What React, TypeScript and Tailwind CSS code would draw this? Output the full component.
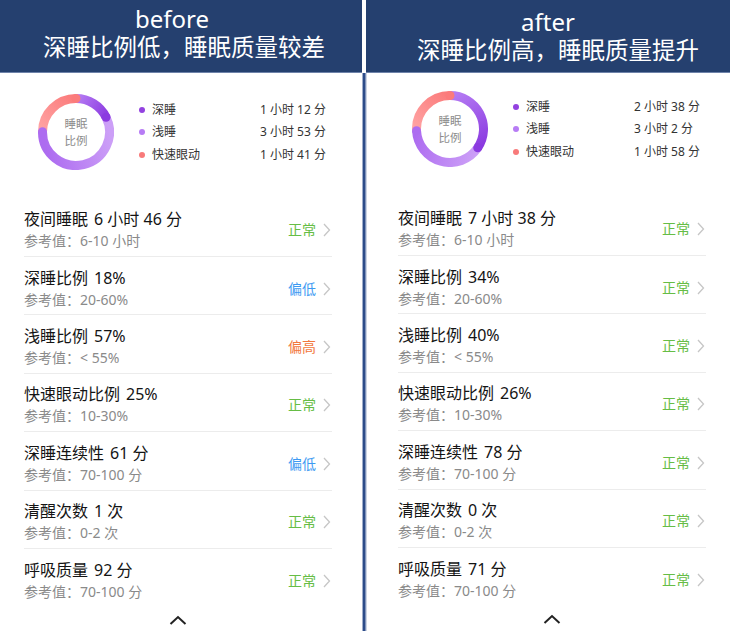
import React from "react";

type Row = { name: string; value: string; ref: string; status: string; color: string };

const GREEN = "#66bd45";
const BLUE = "#3d9af2";
const ORANGE = "#f2773c";

const leftRows: Row[] = [
  { name: "夜间睡眠", value: "6 小时 46 分", ref: "6-10 小时", status: "正常", color: GREEN },
  { name: "深睡比例", value: "18%", ref: "20-60%", status: "偏低", color: BLUE },
  { name: "浅睡比例", value: "57%", ref: "< 55%", status: "偏高", color: ORANGE },
  { name: "快速眼动比例", value: "25%", ref: "10-30%", status: "正常", color: GREEN },
  { name: "深睡连续性", value: "61 分", ref: "70-100 分", status: "偏低", color: BLUE },
  { name: "清醒次数", value: "1 次", ref: "0-2 次", status: "正常", color: GREEN },
  { name: "呼吸质量", value: "92 分", ref: "70-100 分", status: "正常", color: GREEN },
];

const rightRows: Row[] = [
  { name: "夜间睡眠", value: "7 小时 38 分", ref: "6-10 小时", status: "正常", color: GREEN },
  { name: "深睡比例", value: "34%", ref: "20-60%", status: "正常", color: GREEN },
  { name: "浅睡比例", value: "40%", ref: "< 55%", status: "正常", color: GREEN },
  { name: "快速眼动比例", value: "26%", ref: "10-30%", status: "正常", color: GREEN },
  { name: "深睡连续性", value: "78 分", ref: "70-100 分", status: "正常", color: GREEN },
  { name: "清醒次数", value: "0 次", ref: "0-2 次", status: "正常", color: GREEN },
  { name: "呼吸质量", value: "71 分", ref: "70-100 分", status: "正常", color: GREEN },
];

const FONT = { fontFamily: '"Noto Sans", "Noto Sans CJK SC", sans-serif' };

function pt(cx: number, cy: number, r: number, a: number) {
  const rad = (a * Math.PI) / 180;
  return [cx + r * Math.sin(rad), cy - r * Math.cos(rad)];
}

function Donut({ id, deep, light }: { id: string; deep: number; light: number }) {
  const cx = 38, cy = 38, r = 33.5, sw = 9;
  const segs = [
    { a0: 0, a1: deep, c0: "#b57cf3", c1: "#8b3ae0" },
    { a0: deep, a1: deep + light, c0: "#cc9ff7", c1: "#ad6cf0" },
    { a0: deep + light, a1: 360, c0: "#ffa3a3", c1: "#fb7b7b" },
  ];
  return (
    <svg width="76" height="76" viewBox="0 0 76 76">
      <defs>
        {segs.map((s, i) => {
          const [x0, y0] = pt(cx, cy, r, s.a0);
          const [x1, y1] = pt(cx, cy, r, s.a1);
          return (
            <linearGradient key={i} id={`${id}-g${i}`} gradientUnits="userSpaceOnUse" x1={x0} y1={y0} x2={x1} y2={y1}>
              <stop offset="0" stopColor={s.c0} />
              <stop offset="1" stopColor={s.c1} />
            </linearGradient>
          );
        })}
      </defs>
      {segs.map((s, i) => {
        const [x0, y0] = pt(cx, cy, r, s.a0);
        const [x1, y1] = pt(cx, cy, r, s.a1 - 0.01);
        const large = s.a1 - s.a0 > 180 ? 1 : 0;
        return (
          <path
            key={i}
            d={`M ${x0} ${y0} A ${r} ${r} 0 ${large} 1 ${x1} ${y1}`}
            fill="none"
            stroke={`url(#${id}-g${i})`}
            strokeWidth={sw}
          />
        );
      })}
      {segs.map((s, i) => {
        const [x1, y1] = pt(cx, cy, r, s.a1);
        return <circle key={i} cx={x1} cy={y1} r={sw / 2} fill={s.c1} />;
      })}
    </svg>
  );
}

function ChevronRight() {
  return (
    <svg width="8" height="14" viewBox="0 0 8 14" className="ml-[7px] mr-[1px]">
      <polyline points="1,1 6.5,7 1,13" fill="none" stroke="#c6c6c6" strokeWidth="1.3" />
    </svg>
  );
}

function ChevronUp() {
  return (
    <svg width="18" height="10" viewBox="0 0 18 10">
      <polyline points="1.5,9 9,2 16.5,9" fill="none" stroke="#222222" strokeWidth="2" />
    </svg>
  );
}

function Legend({ items }: { items: { label: string; value: string; color: string }[] }) {
  return (
    <div className="flex flex-col">
      {items.map((it) => (
        <div key={it.label} className="flex items-center h-[22.5px] text-[12px] text-[#333333]">
          <div className="w-[6px] h-[6px] rounded-full" style={{ background: it.color }} />
          <div className="ml-[7px] w-[108px]">{it.label}</div>
          <div className="whitespace-nowrap">{it.value}</div>
        </div>
      ))}
    </div>
  );
}

function Content({
  id,
  deep,
  light,
  legend,
  rows,
  section,
}: {
  id: string;
  deep: number;
  light: number;
  legend: { label: string; value: string; color: string }[];
  rows: Row[];
  section: string;
}) {
  return (
    <div className="w-[340px] flex flex-col">
      <div className={`${section} flex items-start ml-[38px]`}>
        <div className="flex items-center">
          <div className="relative w-[76px] h-[76px]">
            <Donut id={id} deep={deep} light={light} />
            <div className="absolute inset-0 flex flex-col items-center justify-center text-[11.5px] leading-[17px] text-[#8c8c8c]">
              <div>睡眠</div>
              <div>比例</div>
            </div>
          </div>
          <div className="ml-[25px]">
            <Legend items={legend} />
          </div>
        </div>
      </div>
      <div className="ml-[24px] w-[308px] flex flex-col">
        {rows.map((r, i) => (
          <div key={r.name}>
            {i > 0 && <div className="h-px bg-[#ececec]" />}
            <div className="h-[57.4px] pt-[9.7px]">
              <div className="h-[44px] flex items-center">
                <div className="flex-1 flex flex-col">
                  <div className="text-[16px] leading-[22px] text-[#141414] whitespace-nowrap">
                    <span>{r.name}</span>
                    <span className="ml-[6px]">{r.value}</span>
                  </div>
                  <div className="text-[14px] leading-[22px] text-[#8a8a8a] whitespace-nowrap">
                    参考值：{r.ref}
                  </div>
                </div>
                <div className="text-[14px] leading-[22px]" style={{ color: r.color }}>
                  {r.status}
                </div>
                <ChevronRight />
              </div>
            </div>
          </div>
        ))}
      </div>
      <div className="flex mt-[9px] ml-[169px]">
        <ChevronUp />
      </div>
    </div>
  );
}

export default function App() {
  const leftLegend = [
    { label: "深睡", value: "1 小时 12 分", color: "#9342e0" },
    { label: "浅睡", value: "3 小时 53 分", color: "#b77cf5" },
    { label: "快速眼动", value: "1 小时 41 分", color: "#f87a7a" },
  ];
  const rightLegend = [
    { label: "深睡", value: "2 小时 38 分", color: "#9342e0" },
    { label: "浅睡", value: "3 小时 2 分", color: "#b77cf5" },
    { label: "快速眼动", value: "1 小时 58 分", color: "#f87a7a" },
  ];
  return (
    <div className="w-[730px] h-[631px] flex bg-white overflow-hidden" style={FONT}>
      <div className="w-[362px] h-full flex flex-col overflow-hidden">
        <div className="h-[73px] bg-[#25406f] border-b border-[#6f83aa] text-white flex flex-col items-center pt-[4px]">
          <div className="text-[24px] leading-[29px] pr-[18px]">before</div>
          <div className="text-[23.5px] leading-[29px] pl-[6px] whitespace-nowrap">深睡比例低，睡眠质量较差</div>
        </div>
        <Content id="l" deep={63.8} light={206.6} legend={leftLegend} rows={leftRows} section="h-[125.6px] pt-[21px]" />
      </div>
      <div className="w-[4px] h-full flex flex-col">
        <div className="h-[73px] bg-white" />
        <div className="flex-1 flex">
          <div className="w-px bg-[#9fadca]" />
          <div className="w-[2px] bg-[#2d4c89]" />
          <div className="w-px bg-[#7f92ba]" />
        </div>
      </div>
      <div className="w-[364px] h-full flex flex-col overflow-hidden">
        <div className="h-[73px] bg-[#25406f] border-b border-[#6f83aa] text-white flex flex-col items-center pt-[7px]">
          <div className="text-[24px] leading-[29px]">after</div>
          <div className="text-[23.5px] leading-[29px] pl-[20px] whitespace-nowrap">深睡比例高，睡眠质量提升</div>
        </div>
        <div className="flex-1 flex">
          <div className="w-px bg-[#cdd5e4]" />
          <div className="ml-[7px]">
            <Content id="r" deep={124.2} light={143} legend={rightLegend} rows={rightRows} section="h-[124.6px] pt-[18px]" />
          </div>
        </div>
      </div>
    </div>
  );
}
